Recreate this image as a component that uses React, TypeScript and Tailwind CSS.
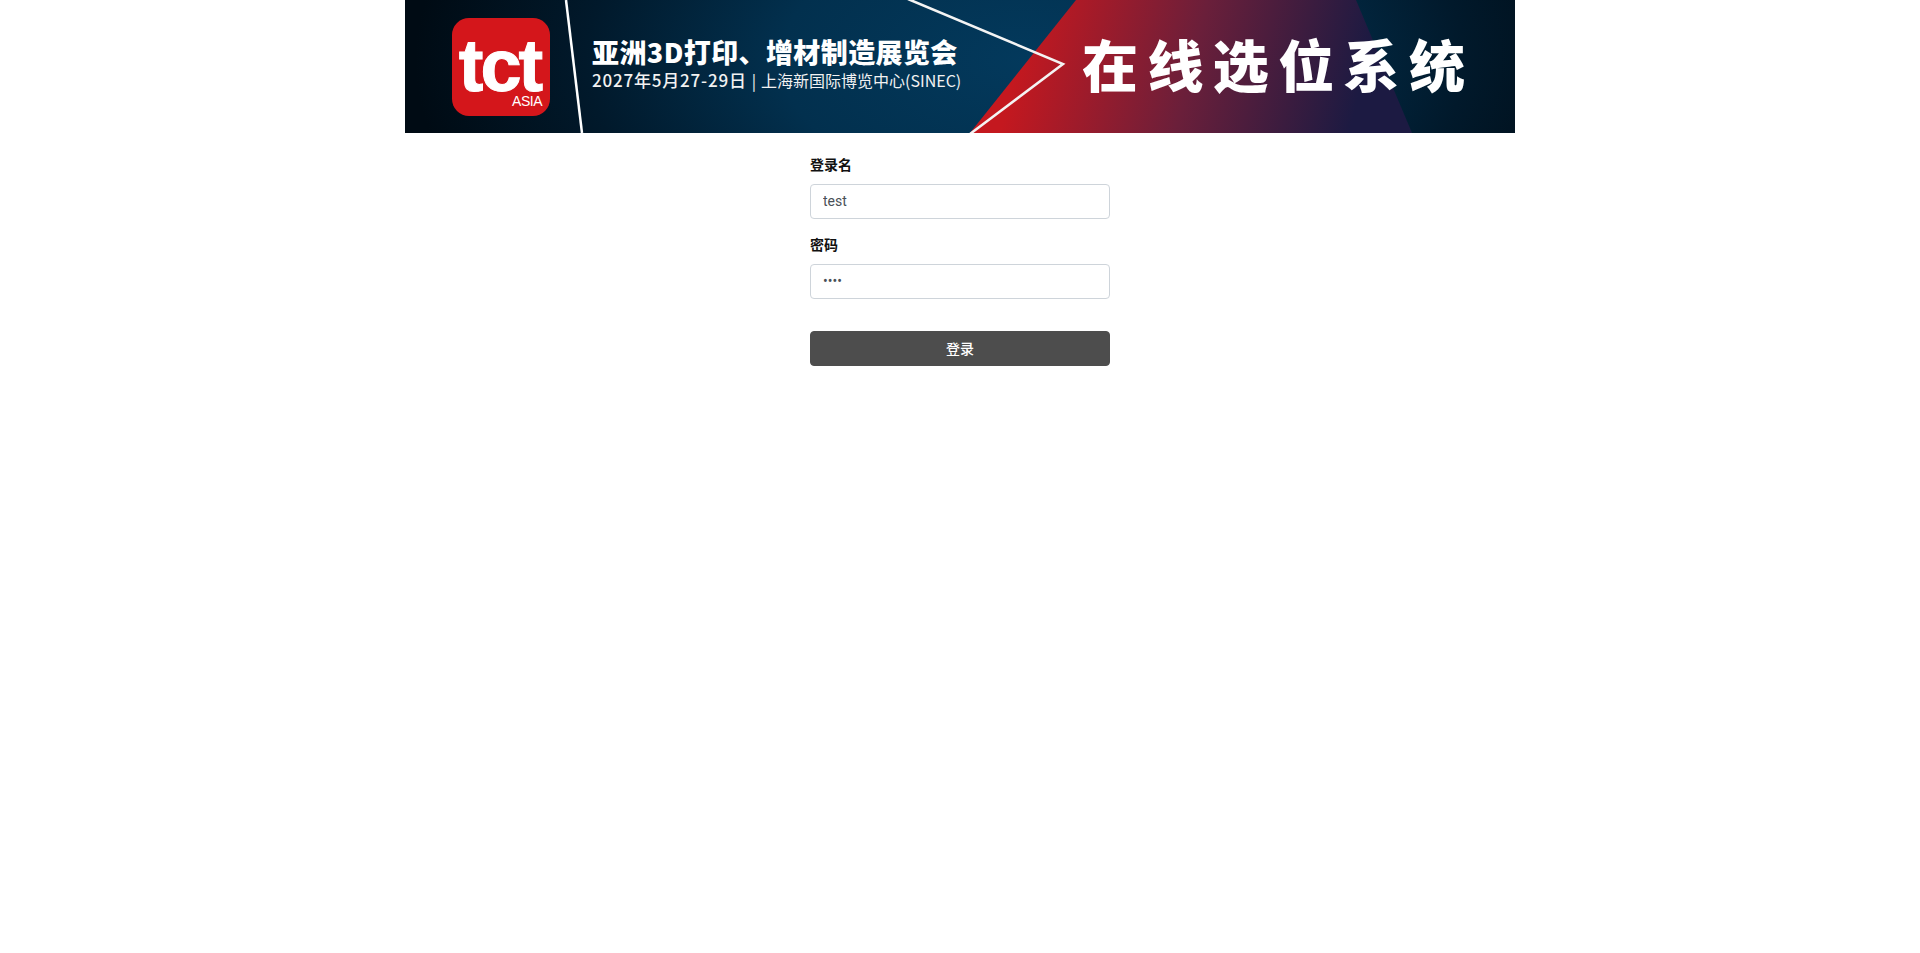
const cjk = "font-['Noto_Sans_CJK_SC',sans-serif]";

function BannerArt() {
  return (
    <svg className="absolute inset-0 h-full w-full" viewBox="0 0 1110 133" preserveAspectRatio="none">
      <defs>
        <radialGradient id="sky" gradientUnits="userSpaceOnUse" cx="620" cy="60" r="610" gradientTransform="matrix(1 0 0 0.55 0 27)">
          <stop offset="0" stopColor="#03395c" />
          <stop offset="0.4" stopColor="#02304e" />
          <stop offset="0.72" stopColor="#01192b" />
          <stop offset="1" stopColor="#000b14" />
        </radialGradient>
        <linearGradient id="wedge" gradientUnits="userSpaceOnUse" x1="620" y1="30" x2="950" y2="110">
          <stop offset="0" stopColor="#c4181f" />
          <stop offset="0.5" stopColor="#6b1f3a" />
          <stop offset="1" stopColor="#1c1a42" />
        </linearGradient>
      </defs>
      <rect width="1110" height="133" fill="#000b14" />
      <rect width="1110" height="133" fill="url(#sky)" />
      <polygon points="671,0 951,0 1007,133 565,133" fill="url(#wedge)" />
      <path d="M161 0 L177 133" stroke="#fff" strokeWidth="2.5" fill="none" />
      <path d="M503 -1 L658 64 L565 134" stroke="#f4f4f4" strokeWidth="2.5" fill="none" />
    </svg>
  );
}

function Logo() {
  return (
    <div className="flex h-[98px] w-[98px] shrink-0 flex-col rounded-[17px] bg-[#d4161b] pt-[18px] font-['Liberation_Sans',sans-serif] text-white">
      <span className="pr-[3px] text-center text-[74px] leading-[60px] font-bold tracking-[-3px] [-webkit-text-stroke:1px_#fff]">
        tct
      </span>
      <span className="pr-2 text-right text-[14px] leading-[10px] tracking-[-0.5px]">ASIA</span>
    </div>
  );
}

function Banner() {
  return (
    <div className="relative flex h-[133px] w-full items-center overflow-hidden pl-[47px]">
      <BannerArt />
      <div className="relative flex items-center">
        <Logo />
        <div className={`mb-[5px] ml-[42px] flex w-[490px] shrink-0 flex-col whitespace-nowrap text-white ${cjk}`}>
          <div className="text-[27px] leading-[32px] font-black tracking-[0.4px]">亚洲3D打印、增材制造展览会</div>
          <div className="text-[#f2f2f2]">
            <span className="text-[17px] leading-[22px] font-medium tracking-[0.8px]">2027年5月27-29日</span>
            <span className="mx-[5px] text-[16px]">|</span>
            <span className="text-[16px] leading-[22px] font-normal">上海新国际博览中心(SINEC)</span>
          </div>
        </div>
        <div className={`mb-[7px] whitespace-nowrap text-[56px] leading-[80px] font-black tracking-[9.4px] text-white ${cjk}`}>
          在线选位系统
        </div>
      </div>
    </div>
  );
}

function Field({ label, type, value }: { label: string; type: string; value: string }) {
  return (
    <div className="flex flex-col gap-[10px]">
      <label className={`text-[14px] leading-[19px] font-bold text-[#111] ${cjk}`}>{label}</label>
      <input
        type={type}
        defaultValue={value}
        className="block h-[35px] w-full rounded border border-[#ced4da] bg-white px-3 pb-px font-['Roboto',sans-serif] text-[14px] text-[#495057] outline-none"
      />
    </div>
  );
}

export default function App() {
  return (
    <div className="min-h-[953px] bg-white">
      <div className="mx-auto w-[1110px]">
        <Banner />
        <form className="mx-auto flex w-[300px] flex-col gap-4 pt-[22px]">
          <Field label="登录名" type="text" value="test" />
          <Field label="密码" type="password" value="test" />
          <button
            type="button"
            className={`mt-4 block h-[35px] w-full rounded border border-[#4d4d4d] bg-[#4d4d4d] pb-px text-[14px] font-medium text-white ${cjk}`}
          >
            登录
          </button>
        </form>
      </div>
    </div>
  );
}
